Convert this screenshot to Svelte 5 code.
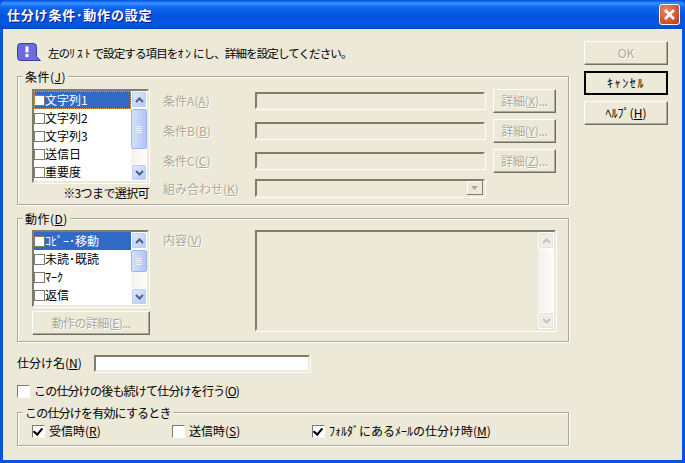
<script>
  const closeList = ['文字列1', '文字列2', '文字列3', '送信日', '重要度'];
  const actionList = ['ｺﾋﾟｰ･移動', '未読･既読', 'ﾏｰｸ', '返信'];
  const detailButtons = ['X', 'Y', 'Z'];
  const conditions = ['A', 'B', 'C'];
</script>

<div class="window">
  <header class="titlebar">
    <span class="title">仕分け条件･動作の設定</span>
    <button class="close" aria-label="閉じる">
      <svg width="13" height="13" viewBox="0 0 13 13">
        <path d="M2 2 L11 11 M11 2 L2 11" stroke="#fff" stroke-width="2.6" fill="none" />
      </svg>
    </button>
  </header>

  <div class="body">
    <div class="main">
      <div class="intro">
        <svg class="bubble" width="24" height="20" viewBox="0 0 24 20">
          <path d="M3.5 .5 H16.5 Q19.5 .5 19.5 3.5 V13.5 L23.5 17.5 H3.5 Q.5 17.5 .5 14.5 V3.5 Q.5 .5 3.5 .5 Z" fill="#6c6ce0" stroke="#3e3e9e" />
          <path d="M8.5 3.5 H11.5 V9.5 H8.5 Z M8.5 11 H11.5 V14 H8.5 Z" fill="#fff" />
        </svg>
        <span class="introtext">左の<span class="hw">ﾘｽﾄ</span>で設定する項目を<span class="hw">ｵﾝ</span>にし、詳細を設定してください。</span>
      </div>

      <section class="group cond">
        <div class="legend">条件(<u>J</u>)</div>
        <div class="left">
          <div class="list">
            <div class="rows">
              {#each closeList as item, i}
                <div class="row" class:sel={i === 0} class:focus={i === 0}><i class="box"></i><span>{item}</span></div>
              {/each}
            </div>
            <div class="scroll">
              <div class="arrow"><svg width="9" height="6" viewBox="0 0 9 6"><path d="M1 5 L4.5 1.5 L8 5" stroke="#4d6185" stroke-width="2" fill="none" /></svg></div>
              <div class="thumb thumb1"><b></b><b></b><b></b><b></b></div>
              <div class="track"></div>
              <div class="arrow"><svg width="9" height="6" viewBox="0 0 9 6"><path d="M1 1 L4.5 4.5 L8 1" stroke="#4d6185" stroke-width="2" fill="none" /></svg></div>
            </div>
          </div>
          <div class="note">※3つまで選択可</div>
        </div>
        <div class="fields">
          {#each conditions as c, i}
            <span class="off label">条件{c}(<u>{c}</u>)</span>
            <div class="edit"></div>
            <button class="btn detail" disabled><span class="off">詳細(<u>{detailButtons[i]}</u>)...</span></button>
          {/each}
          <span class="off label">組み合わせ(<u>K</u>)</span>
          <div class="edit combo">
            <div class="dropbtn"><svg width="7" height="4" viewBox="0 0 7 4"><path d="M0 0 H7 L3.5 4 Z" fill="#aca899" /></svg></div>
          </div>
        </div>
      </section>

      <section class="group act">
        <div class="legend">動作(<u>D</u>)</div>
        <div class="left">
          <div class="list short">
            <div class="rows">
              {#each actionList as item, i}
                <div class="row" class:sel={i === 0}><i class="box"></i><span>{item}</span></div>
              {/each}
            </div>
            <div class="scroll">
              <div class="arrow"><svg width="9" height="6" viewBox="0 0 9 6"><path d="M1 5 L4.5 1.5 L8 5" stroke="#4d6185" stroke-width="2" fill="none" /></svg></div>
              <div class="thumb thumb2"><b></b><b></b><b></b><b></b></div>
              <div class="track"></div>
              <div class="arrow"><svg width="9" height="6" viewBox="0 0 9 6"><path d="M1 1 L4.5 4.5 L8 1" stroke="#4d6185" stroke-width="2" fill="none" /></svg></div>
            </div>
          </div>
          <button class="btn wide" disabled><span class="off">動作の詳細(<u>E</u>)...</span></button>
        </div>
        <span class="off label content">内容(<u>V</u>)</span>
        <div class="edit memo">
          <div class="scroll dim">
            <div class="arrow"><svg width="9" height="6" viewBox="0 0 9 6"><path d="M1 5 L4.5 1.5 L8 5" stroke="#c4c2b8" stroke-width="2" fill="none" /></svg></div>
            <div class="track"></div>
            <div class="arrow"><svg width="9" height="6" viewBox="0 0 9 6"><path d="M1 1 L4.5 4.5 L8 1" stroke="#c4c2b8" stroke-width="2" fill="none" /></svg></div>
          </div>
        </div>
      </section>

      <div class="name">
        <span class="namelabel">仕分け名(<u>N</u>)</span>
        <div class="edit live"></div>
      </div>

      <label class="check cont"><i class="box big"></i><span class="tight">この仕分けの後も続けて仕分けを行う(<u>O</u>)</span></label>

      <section class="group when">
        <div class="legend tight">この仕分けを有効にするとき</div>
        <label class="check c1"><i class="box big on"></i><span>受信時(<u>R</u>)</span></label>
        <label class="check c2"><i class="box big"></i><span>送信時(<u>S</u>)</span></label>
        <label class="check"><i class="box big on"></i><span>ﾌｫﾙﾀﾞにあるﾒｰﾙの仕分け時(<u>M</u>)</span></label>
      </section>
    </div>

    <aside class="side">
      <button class="btn action" disabled><span class="off">OK</span></button>
      <button class="btn action default"><span class="wide-kana">ｷｬﾝｾﾙ</span></button>
      <button class="btn action">ﾍﾙﾌﾟ(<u>H</u>)</button>
    </aside>
  </div>
</div>

<style>
  :global(body) {
    margin: 0;
    background: #0855dd;
  }

  .window {
    width: 685px;
    height: 463px;
    display: flex;
    flex-direction: column;
    box-sizing: border-box;
    font: 12px/16px "Noto Sans CJK JP", "Liberation Sans", sans-serif;
    color: #000;
    overflow: hidden;
    background: #0855dd;
  }

  .titlebar {
    height: 29px;
    flex: none;
    display: flex;
    align-items: center;
    justify-content: space-between;
    padding: 0 5px 0 7px;
    border-radius: 7px 7px 0 0;
    background: linear-gradient(#0a5be6 0, #0a5be6 1px, #3a93ff 3px, #0f68ee 7px, #0453dd 16px, #0558e4 24px, #0349c8 29px);
  }

  .title {
    color: #fff;
    font-size: 13px;
    font-weight: 700;
    letter-spacing: 0.8px;
    text-shadow: 1px 1px #0f1089;
  }

  .close {
    width: 21px;
    height: 21px;
    padding: 0;
    display: flex;
    align-items: center;
    justify-content: center;
    border: 1px solid #fff;
    border-radius: 3px;
    background: radial-gradient(circle at 35% 30%, #e88a6c, #d6532c 60%, #bf3a12);
  }

  .body {
    flex: 1;
    margin: 0 3px 3px;
    display: flex;
    background: #ece9d8;
  }

  .main {
    width: 566px;
    padding: 12px 0 0 14px;
    box-sizing: border-box;
  }

  .intro {
    height: 24px;
    display: flex;
    align-items: center;
    gap: 7px;
    margin-bottom: 11px;
  }

  .introtext {
    font-size: 11.5px;
    letter-spacing: -0.88px;
    white-space: nowrap;
  }

  .hw {
    letter-spacing: 2px;
  }

  .bubble {
    flex: none;
  }

  .tight {
    letter-spacing: -0.8px;
  }

  .group {
    width: 552px;
    box-sizing: border-box;
    border: 1px solid #aca899;
    box-shadow: 1px 1px #fff, inset 1px 1px #fff;
    display: flex;
    position: relative;
  }

  .legend {
    position: absolute;
    top: -8px;
    left: 5px;
    padding: 0 2px;
    background: #ece9d8;
    white-space: nowrap;
    letter-spacing: 0.5px;
  }

  .legend.tight {
    letter-spacing: -0.8px;
  }

  .cond {
    height: 129px;
    padding: 12px 0 0 14px;
    gap: 14px;
  }

  .act {
    height: 124px;
    margin-top: 13px;
    padding: 11px 0 0 14px;
    gap: 14px;
  }

  .left {
    width: 117px;
    flex: none;
  }

  .list {
    width: 117px;
    height: 94px;
    box-sizing: border-box;
    display: flex;
    background: #fff;
    border: 2px solid;
    border-color: #7f7c6e #ece9d8 #ece9d8 #7f7c6e;
    box-shadow: 1px 1px #fff;
  }

  .list.short {
    height: 77px;
  }

  .rows {
    width: 97px;
    flex: none;
  }

  .row {
    height: 18px;
    display: flex;
    align-items: center;
    overflow: hidden;
    white-space: nowrap;
  }

  .row.sel {
    background: #316ac5;
    color: #fff;
  }

  .row.focus {
    outline: 1px dotted #e0a050;
    outline-offset: -1px;
  }

  .box {
    width: 9px;
    height: 9px;
    flex: none;
    border: 1px solid #7f7c6e;
    background: #fff;
    display: inline-block;
  }

  .scroll {
    width: 16px;
    flex: none;
    display: flex;
    flex-direction: column;
    height: 100%;
  }

  .arrow {
    height: 17px;
    flex: none;
    box-sizing: border-box;
    display: flex;
    align-items: center;
    justify-content: center;
    border: 1px solid #fff;
    border-radius: 2px;
    background: linear-gradient(135deg, #e1eafe, #b4c8f6);
    box-shadow: inset 0 0 0 1px #bdd0fa;
  }

  .thumb {
    flex: none;
    margin-top: 1px;
    box-sizing: border-box;
    display: flex;
    flex-direction: column;
    justify-content: center;
    align-items: center;
    gap: 1px;
    border: 1px solid #9eb6e8;
    border-radius: 2px;
    background: linear-gradient(90deg, #d4e0fc, #bed0fb 60%, #b0c6f7);
  }

  .thumb b {
    width: 6px;
    height: 1px;
    background: #eef3fe;
  }

  .thumb1 {
    height: 40px;
  }

  .thumb2 {
    height: 22px;
  }

  .track {
    flex: 1;
    background: linear-gradient(90deg, #f3f1ec, #fefefb);
  }

  .note {
    margin-top: 2px;
    text-align: right;
    letter-spacing: -0.6px;
  }

  .off {
    color: #aca899;
    text-shadow: 1px 1px #fff;
  }

  .fields {
    display: grid;
    grid-template-columns: 92px 238px 63px;
    grid-template-rows: 24px 24px 24px 19px;
    row-gap: 6px;
    align-items: center;
  }

  .edit {
    height: 17px;
    box-sizing: border-box;
    border: 2px solid;
    border-color: #7f7c6e #ece9d8 #ece9d8 #7f7c6e;
    box-shadow: 1px 1px #fff;
  }

  .fields .edit {
    width: 230px;
    align-self: start;
    margin-top: 3px;
  }

  .fields .combo {
    display: flex;
    justify-content: flex-end;
    height: 18px;
    margin-top: 0;
  }

  .dropbtn {
    width: 16px;
    height: 14px;
    box-sizing: border-box;
    display: flex;
    align-items: center;
    justify-content: center;
    background: #ece9d8;
    border-right: 1px solid #7f7c6e;
    border-bottom: 1px solid #7f7c6e;
    box-shadow: inset 1px 1px #fff;
  }

  .btn {
    padding: 0;
    height: 24px;
    box-sizing: border-box;
    font: inherit;
    color: #000;
    background: #ece9d8;
    border: 1px solid;
    border-color: #fff #716f64 #716f64 #fff;
    box-shadow: inset -1px -1px #aca899;
  }

  .detail {
    width: 63px;
    letter-spacing: -0.3px;
  }

  .wide {
    width: 118px;
    margin-top: 4px;
    letter-spacing: -0.6px;
  }

  .content {
    width: 78px;
    flex: none;
    height: 16px;
    margin-top: 2px;
  }

  .memo {
    width: 301px;
    height: 101px;
    display: flex;
    justify-content: flex-end;
  }

  .scroll.dim .arrow {
    background: #f0efe6;
    box-shadow: inset 0 0 0 1px #e6e4d8;
  }

  .name {
    height: 18px;
    margin-top: 12px;
    display: flex;
    align-items: center;
  }

  .namelabel {
    width: 77px;
  }

  .live {
    width: 216px;
    background: #fff;
  }

  .check {
    display: flex;
    align-items: center;
    gap: 4px;
  }

  .box.big {
    width: 11px;
    height: 11px;
    border: 1px solid #7f7c6e;
    border-right-color: #fff;
    border-bottom-color: #fff;
    margin: 0;
    position: relative;
  }

  .box.on::after {
    content: "";
    position: absolute;
    left: 2px;
    top: 0;
    width: 4px;
    height: 7px;
    border: solid #000;
    border-width: 0 2px 2px 0;
    transform: rotate(40deg);
  }

  .cont {
    margin-top: 9px;
    height: 20px;
  }

  .when {
    height: 34px;
    margin-top: 11px;
    padding: 4px 0 0 14px;
    align-items: center;
  }

  .c1,
  .c2 {
    width: 140px;
  }

  .side {
    display: flex;
    flex-direction: column;
    gap: 6px;
    padding: 12px 0 0 15px;
  }

  .action {
    width: 84px;
  }

  .default {
    border: 2px solid #000;
    box-shadow: none;
  }

  .wide-kana {
    letter-spacing: 1.6px;
  }
</style>
